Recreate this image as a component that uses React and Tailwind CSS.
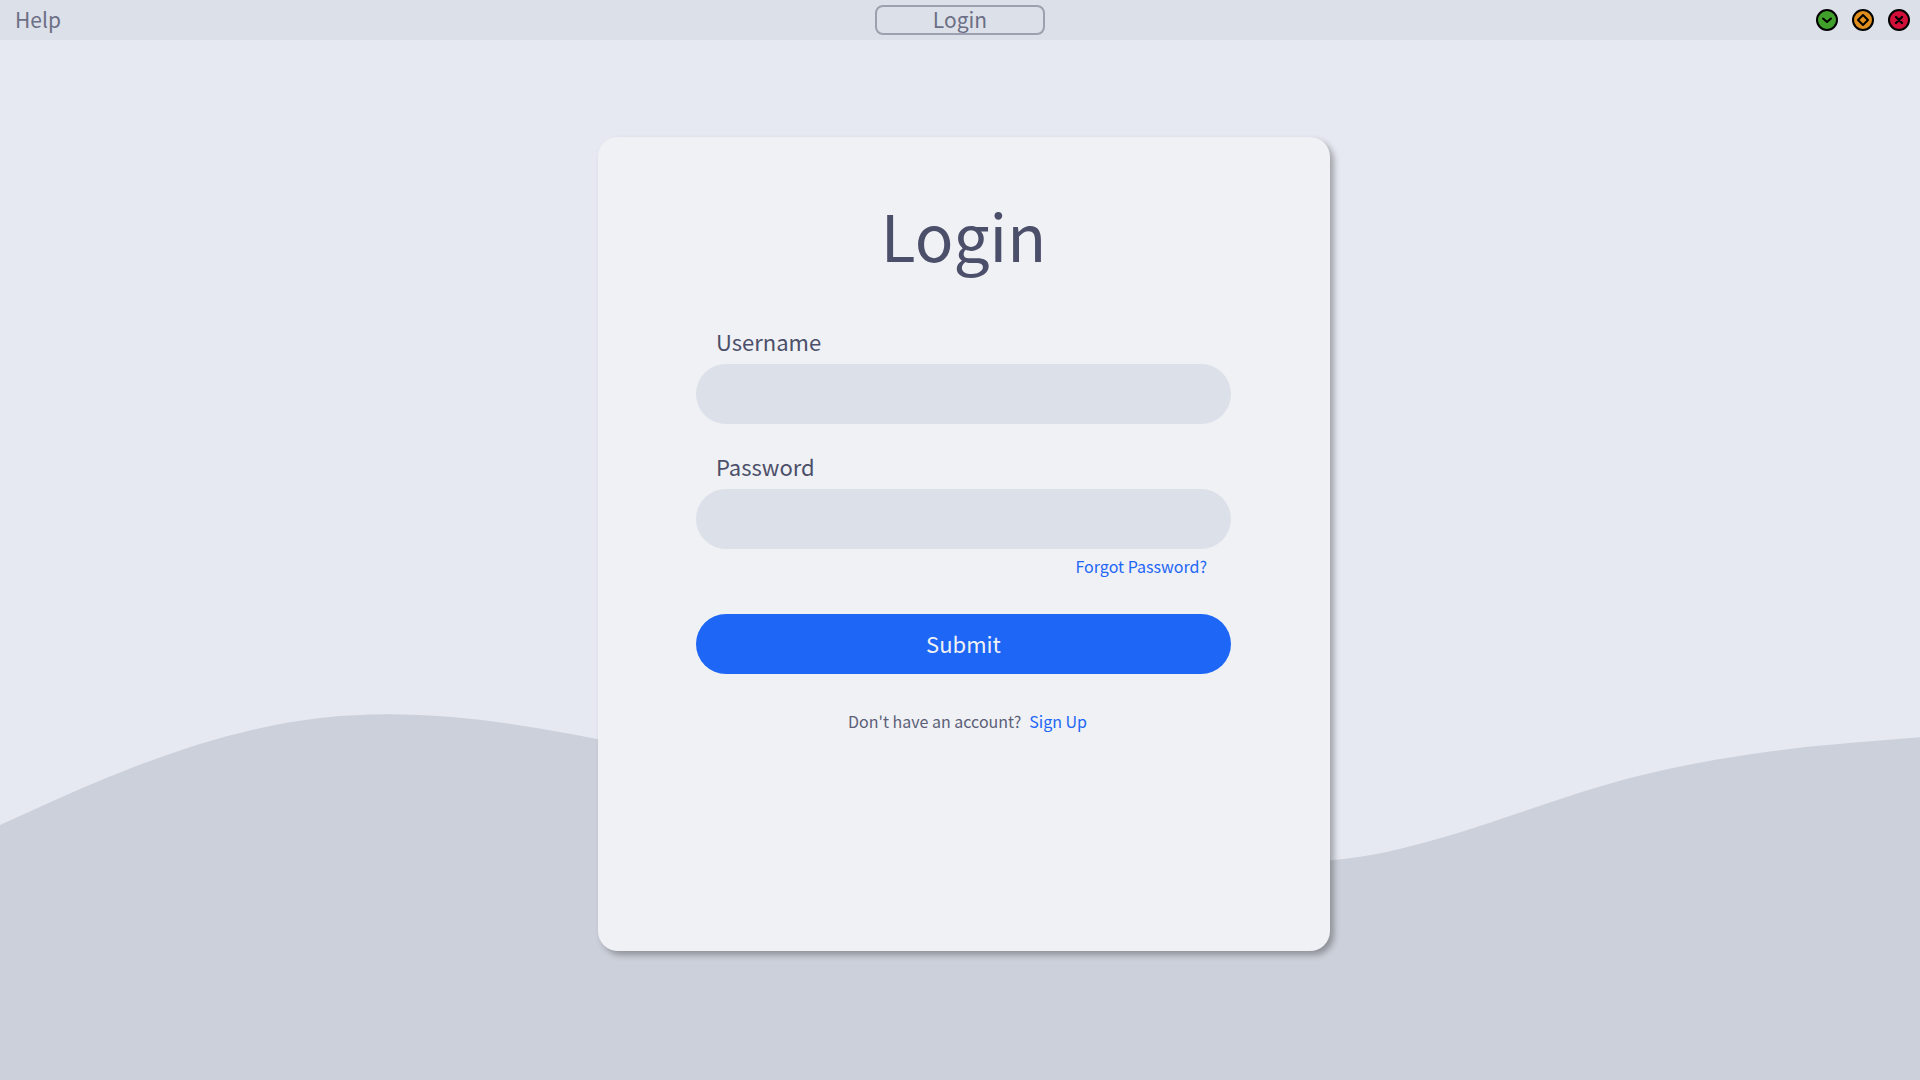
import React from "react";

function WindowButton({ label, color, children }) {
  return (
    <button
      type="button"
      aria-label={label}
      className={`h-[22px] w-[22px] rounded-full border-2 border-black ${color}`}
    >
      <svg
        viewBox="0 0 18 18"
        className="h-full w-full"
        fill="none"
        stroke="#000"
        strokeWidth="2"
        strokeLinecap="round"
        strokeLinejoin="round"
      >
        {children}
      </svg>
    </button>
  );
}

function TitleBar() {
  return (
    <header className="relative grid h-10 grid-cols-[1fr_auto_1fr] items-center bg-[#dce0e8] text-[21px] leading-7 text-[#6c6f85]">
      <nav className="pb-0.5 pl-[15px]">
        <button type="button">Help</button>
      </nav>
      <div className="flex h-[30px] w-[170px] items-center justify-center rounded-lg border-2 border-[#9ca0b0] pb-0.5">
        Login
      </div>
      <div className="flex items-center justify-end gap-3.5 pr-2.5">
        <WindowButton label="Minimize" color="bg-[#40a02b]">
          <path d="M5 7.5 L9 11 L13 7.5" />
        </WindowButton>
        <WindowButton label="Maximize" color="bg-[#df8e1d]">
          <path d="M9 4 L14 9 L9 14 L4 9 Z" />
        </WindowButton>
        <WindowButton label="Close" color="bg-[#d20f39]">
          <path d="M6 6 L12 12 M12 6 L6 12" strokeWidth="2.4" />
        </WindowButton>
      </div>
    </header>
  );
}

function Field({ id, label, type }) {
  return (
    <div className="flex flex-col">
      <label htmlFor={id} className="mb-[7px] pl-5 text-[22px] leading-8">
        {label}
      </label>
      <input id={id} type={type} className="h-15 w-full rounded-full bg-[#dce0e8] px-5 text-[22px] outline-none" />
    </div>
  );
}

function LoginCard() {
  return (
    <form
      onSubmit={(e) => e.preventDefault()}
      className="flex min-h-[814px] w-full max-w-[732px] flex-col rounded-[20px] bg-[#eff1f5] pt-[49px] pr-[99px] pl-[98px] text-[#4c4f69] shadow-[4px_4px_6px_rgba(0,0,0,0.3)]"
    >
      <h1 className="text-center text-[64px] leading-24">Login</h1>
      <div className="mt-[43px] flex flex-col gap-[26px]">
        <Field id="username" label="Username" type="text" />
        <Field id="password" label="Password" type="password" />
      </div>
      <a href="#forgot" className="mt-[3px] mr-6 self-end text-base leading-7 text-[#1e66f5]">
        Forgot Password?
      </a>
      <button type="submit" className="mt-[34px] h-15 rounded-full bg-[#1e66f5] pb-px text-[22px] text-[#eff1f5]">
        Submit
      </button>
      <p className="mt-[33px] flex justify-center gap-2 pl-2 text-base leading-7 text-[#5c5f77]">
        Don't have an account?
        <a href="#signup" className="text-[#1e66f5]">
          Sign Up
        </a>
      </p>
    </form>
  );
}

export default function App() {
  return (
    <div className="relative flex min-h-screen flex-col overflow-hidden bg-[#e6e9f1] font-['Noto_Sans_CJK_SC',sans-serif]">
      <svg
        aria-hidden="true"
        viewBox="0 640 1920 440"
        preserveAspectRatio="none"
        className="absolute bottom-0 left-0 h-[440px] w-full"
      >
        <path
          fill="#ccd0da"
          d="M0 825L53 801C107 777 213 730 320 718C427 706 533 725 640 748C747 771 853 833 960 847C1067 861 1173 854 1280 861C1387 868 1493 818.5 1600 786.5C1707 754.5 1813 746 1867 741.5L1920 737.3V1080H0Z"
        />
      </svg>
      <TitleBar />
      <main className="relative flex flex-1 items-start justify-center pt-[97px] pl-2">
        <LoginCard />
      </main>
    </div>
  );
}
